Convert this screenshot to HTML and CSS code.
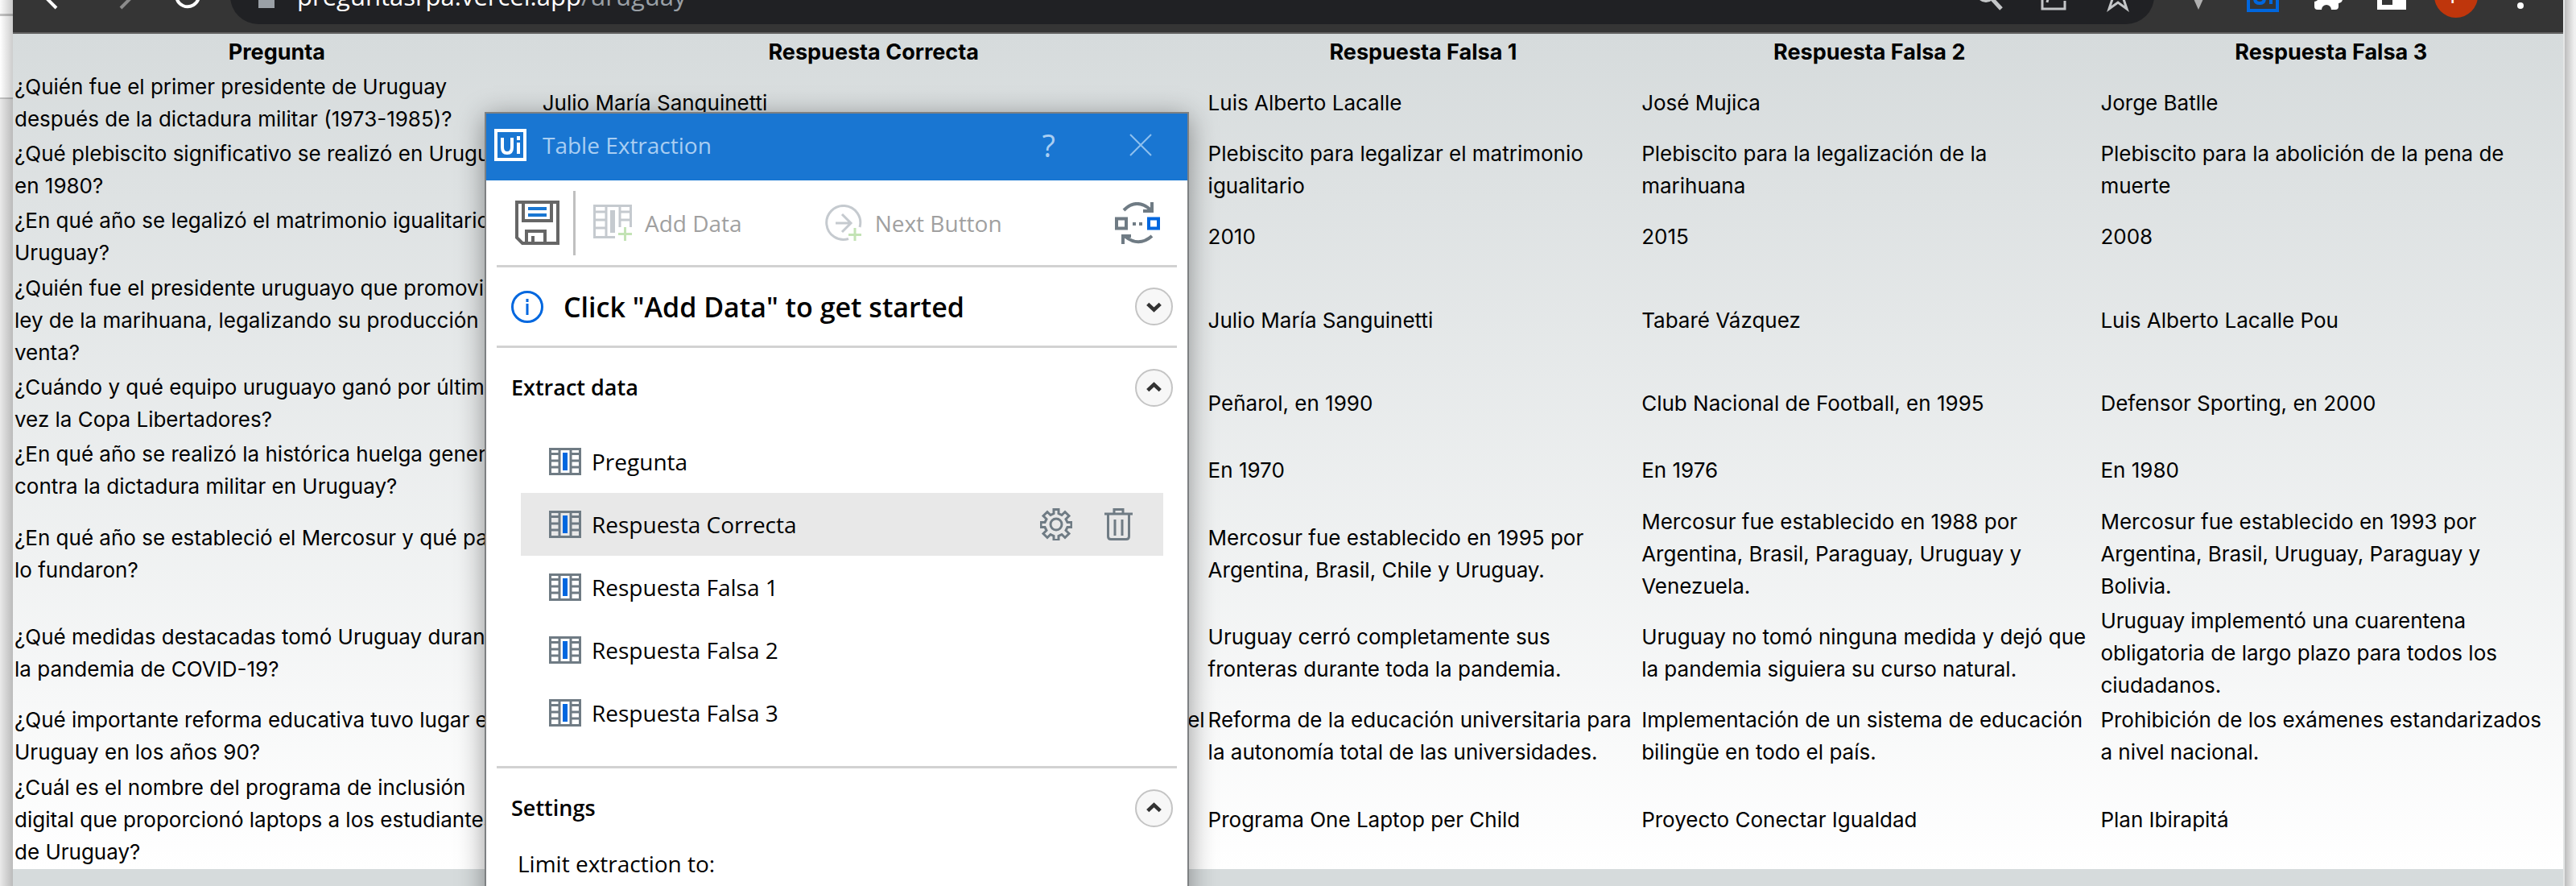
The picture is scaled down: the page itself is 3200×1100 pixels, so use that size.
FILE: index.html
```html
<!DOCTYPE html>
<html lang="es">
<head>
<meta charset="utf-8">
<title>Preguntas de Uruguay</title>
<link rel="stylesheet" href="styles.css">
</head>
<body>
<svg class="defs" aria-hidden="true">
  <symbol id="column" viewBox="0 0 40 34">
    <path d="M1.5 1.5h37v31h-37zM13 2v30M27 2v30M2 7.500h11M2 16h11M2 24h11M27 7.500h11M27 16h11M27 24h11" fill="none" stroke="#6f7b84" stroke-width="3"/>
    <path d="M17 6h6v22h-6z" fill="#0067df"/>
  </symbol>
  <symbol id="up" viewBox="0 0 47 47"><path d="M15 27l8.500-8 8.500 8" fill="none" stroke="#333" stroke-width="5"/></symbol>
  <symbol id="down" viewBox="0 0 47 47"><path d="M15 20l8.500 8 8.500-8" fill="none" stroke="#333" stroke-width="5"/></symbol>
</svg>
<div class="desktop">
  <div class="behind"></div>
  <main class="browser">
    <header class="bar">
      <nav class="nav">
        <button class="tool" aria-label="Atrás"><svg viewBox="0 0 40 40"><path d="M37 20H7M21 5L6 20l15 15" stroke="#fff" stroke-width="4" fill="none"/></svg></button>
        <button class="tool" aria-label="Adelante"><svg viewBox="0 0 40 40"><path d="M3 20h30M19 5l15 15-15 15" stroke="#8b8b8b" stroke-width="4" fill="none"/></svg></button>
        <button class="tool" aria-label="Recargar"><svg viewBox="0 0 40 40"><path d="M33 14a14 14 0 1 0 1 6M34 4v11H23" stroke="#fff" stroke-width="4" fill="none"/></svg></button>
      </nav>
      <div class="address">
        <svg class="lock" viewBox="0 0 20 30"><path d="M0 10h20v20H0zM4 11V6a6 6 0 0 1 12 0v5" fill="#9aa0a6"/></svg>
        <a class="url" href="#">preguntasrpa.vercel.app<span>/uruguay</span></a>
        <button class="tool" aria-label="Buscar"><svg viewBox="0 0 40 40"><circle cx="16" cy="16" r="10" stroke="#c4c6c8" stroke-width="4" fill="none"/><path d="M23 23l12 13" stroke="#c4c6c8" stroke-width="5"/></svg></button>
        <button class="tool" aria-label="Compartir"><svg viewBox="0 0 40 40"><path d="M15 8H6v28h28V26M12 28q2-13 20-15M25 5l9 8-9 8" stroke="#c4c6c8" stroke-width="3" fill="none"/></svg></button>
        <button class="tool" aria-label="Favorito"><svg viewBox="0 0 40 40"><path d="M20 4l4 13h13L27 24l4 12-11-8-11 8 4-12L3 17h13z" stroke="#c4c6c8" stroke-width="3" fill="none"/></svg></button>
      </div>
      <div class="extensions">
        <button class="tool" aria-label="Vue"><svg viewBox="0 0 40 40"><path d="M7 8h26L20 37z" fill="#b0b0b0"/></svg></button>
        <button class="tool" aria-label="UiPath"><svg viewBox="0 0 40 40"><path d="M2 2h36v36H2z" stroke="#0067df" stroke-width="4" fill="none"/><path d="M10 12v11q0 6 6 6t6-6V12M30 17v13M30 10v4" stroke="#0067df" stroke-width="4" fill="none"/></svg></button>
        <button class="tool" aria-label="Extensiones"><svg viewBox="0 0 40 40"><path d="M4 12q0-4 4-4h7a5 5 0 0 1 10 0h5q4 0 4 4v7a5 5 0 0 1 0 10v4q0 4-4 4h-5a6 6 0 0 0-12 0H8q-4 0-4-4v-6a5 5 0 0 0 0-10z" fill="#fff"/></svg></button>
        <button class="tool" aria-label="Panel lateral"><svg viewBox="0 0 40 40"><path d="M2 5h36v32H2zM8 11v20h13V11z" fill="#fff" fill-rule="evenodd"/></svg></button>
        <button class="avatar" aria-label="Perfil">F</button>
        <button class="tool" aria-label="Menú"><svg viewBox="0 0 40 40"><circle cx="20" cy="8" r="4" fill="#fff"/><circle cx="20" cy="20" r="4" fill="#fff"/><circle cx="20" cy="32" r="4" fill="#fff"/></svg></button>
      </div>
    </header>
    <table class="quiz">
      <colgroup><col class="c1"><col class="c2"><col class="c3"><col class="c4"><col class="c5"></colgroup>
      <thead>
        <tr><th>Pregunta</th><th>Respuesta Correcta</th><th>Respuesta Falsa 1</th><th>Respuesta Falsa 2</th><th>Respuesta Falsa 3</th></tr>
      </thead>
      <tbody>
        <tr><td>¿Quién fue el primer presidente de Uruguay<br>después de la dictadura militar (1973-1985)?</td><td>Julio María Sanguinetti</td><td>Luis Alberto Lacalle</td><td>José Mujica</td><td>Jorge Batlle</td></tr>
        <tr><td>¿Qué plebiscito significativo se realizó en Uruguay<br>en 1980?</td><td></td><td>Plebiscito para legalizar el matrimonio<br>igualitario</td><td>Plebiscito para la legalización de la<br>marihuana</td><td>Plebiscito para la abolición de la pena de<br>muerte</td></tr>
        <tr><td>¿En qué año se legalizó el matrimonio igualitario en<br>Uruguay?</td><td></td><td>2010</td><td>2015</td><td>2008</td></tr>
        <tr><td>¿Quién fue el presidente uruguayo que promovió la<br>ley de la marihuana, legalizando su producción y<br>venta?</td><td></td><td>Julio María Sanguinetti</td><td>Tabaré Vázquez</td><td>Luis Alberto Lacalle Pou</td></tr>
        <tr><td>¿Cuándo y qué equipo uruguayo ganó por última<br>vez la Copa Libertadores?</td><td></td><td>Peñarol, en 1990</td><td>Club Nacional de Football, en 1995</td><td>Defensor Sporting, en 2000</td></tr>
        <tr><td>¿En qué año se realizó la histórica huelga general<br>contra la dictadura militar en Uruguay?</td><td></td><td>En 1970</td><td>En 1976</td><td>En 1980</td></tr>
        <tr><td>¿En qué año se estableció el Mercosur y qué países<br>lo fundaron?</td><td></td><td>Mercosur fue establecido en 1995 por<br>Argentina, Brasil, Chile y Uruguay.</td><td>Mercosur fue establecido en 1988 por<br>Argentina, Brasil, Paraguay, Uruguay y<br>Venezuela.</td><td>Mercosur fue establecido en 1993 por<br>Argentina, Brasil, Uruguay, Paraguay y<br>Bolivia.</td></tr>
        <tr><td>¿Qué medidas destacadas tomó Uruguay durante<br>la pandemia de COVID-19?</td><td></td><td>Uruguay cerró completamente sus<br>fronteras durante toda la pandemia.</td><td>Uruguay no tomó ninguna medida y dejó que<br>la pandemia siguiera su curso natural.</td><td>Uruguay implementó una cuarentena<br>obligatoria de largo plazo para todos los<br>ciudadanos.</td></tr>
        <tr><td>¿Qué importante reforma educativa tuvo lugar en<br>Uruguay en los años 90?</td><td class="end">el</td><td>Reforma de la educación universitaria para<br>la autonomía total de las universidades.</td><td>Implementación de un sistema de educación<br>bilingüe en todo el país.</td><td>Prohibición de los exámenes estandarizados<br>a nivel nacional.</td></tr>
        <tr><td>¿Cuál es el nombre del programa de inclusión<br>digital que proporcionó laptops a los estudiantes<br>de Uruguay?</td><td></td><td>Programa One Laptop per Child</td><td>Proyecto Conectar Igualdad</td><td>Plan Ibirapitá</td></tr>
      </tbody>
    </table>
  </main>
  <div class="behind right"></div>
</div>

<section class="dialog" role="dialog" aria-labelledby="dialog-title">
  <header class="titlebar">
    <svg class="logo" viewBox="0 0 40 40"><path d="M2 2h36v36H2z" stroke="#fff" stroke-width="4" fill="none"/><path d="M10 11v12q0 7 6 7t6-7V11M30 17v14M30 9v5" stroke="#fff" stroke-width="4" fill="none"/></svg>
    <h1 id="dialog-title">Table Extraction</h1>
    <button class="help" aria-label="Help">?</button>
    <button class="close" aria-label="Close"><svg viewBox="0 0 28 28"><path d="M1 1l26 26M27 1L1 27" stroke="#8fc0ee" stroke-width="2"/></svg></button>
  </header>
  <div class="content">
    <div class="toolbar">
      <button class="save" aria-label="Save"><svg viewBox="0 0 55 55"><path d="M2 2h51v51H9l-7-7zM10 3v22h35V3M14 53V38h23v15M22 44v9" fill="none" stroke="#666" stroke-width="4"/><path d="M16 10h23M16 18h23" stroke="#1976d2" stroke-width="4"/></svg></button>
      <button class="action add" disabled><svg viewBox="0 0 48 46"><path d="M27 40.500H1.500v-39h45V28M16 2v38M33 2v26M2 9h14M2 19h14M2 29h14M33 9h13M33 19h13" fill="none" stroke="#c5cacf" stroke-width="3"/><path d="M21 7h6v28h-6z" fill="#c5cacf"/><path d="M31 36.500h17M39.500 28v17" stroke="#c3e3b5" stroke-width="3"/></svg>Add Data</button>
      <button class="action next" disabled><svg viewBox="0 0 46 46"><path d="M43 28A21 21 0 1 0 29 42.500M13 23h19M21 12l11 11-11 11" fill="none" stroke="#c5cacf" stroke-width="3"/><path d="M29 37.500h16M37 29v16" stroke="#c3e3b5" stroke-width="3"/></svg>Next Button</button>
      <button class="swap" aria-label="Change selection"><svg viewBox="0 0 56 52"><path d="M11 10q16-16 34 0" fill="none" stroke="#6f7b84" stroke-width="4"/><path d="M48 0v13H35v-4h9V0z" fill="#6f7b84"/><path d="M46 42q-16 14-33 1" fill="none" stroke="#6f7b84" stroke-width="4"/><path d="M8 52V40h12v4h-8v8z" fill="#6f7b84"/><path d="M2 20.500h12v12H2z" fill="none" stroke="#6f7b84" stroke-width="4"/><path d="M42 20.500h12v12H42z" fill="none" stroke="#0067df" stroke-width="4"/><path d="M22 25h4v4h-4zM30 25h4v4h-4z" fill="#6f7b84"/></svg></button>
    </div>
    <div class="hint">
      <svg class="info" viewBox="0 0 40 40"><circle cx="20" cy="20" r="18.500" fill="none" stroke="#0067df" stroke-width="3"/><path d="M20 10v4M20 16v14" stroke="#0067df" stroke-width="3"/></svg>
      <h2>Click "Add Data" to get started</h2>
      <button class="round" aria-label="Expand"><svg><use href="#down"/></svg></button>
    </div>
    <div class="extract">
      <div class="head"><h3>Extract data</h3><button class="round" aria-label="Collapse extract data"><svg><use href="#up"/></svg></button></div>
      <ul class="columns">
        <li><svg class="col"><use href="#column"/></svg>Pregunta</li>
        <li class="selected"><svg class="col"><use href="#column"/></svg>Respuesta Correcta
          <button class="gear" aria-label="Column settings"><svg viewBox="0 0 40 40"><path d="M17 1.500h6v5l4 2 4-4 5 5-4 4 2 4h5v6h-5l-2 4 4 4-5 5-4-4-4 2v5h-6v-5l-4-2-4 4-5-5 4-4-2-4h-5v-6h5l2-4-4-4 5-5 4 4 4-2z" fill="none" stroke="#6f7b84" stroke-width="3"/><circle cx="20" cy="20" r="7" fill="none" stroke="#6f7b84" stroke-width="3"/></svg></button>
          <button class="trash" aria-label="Delete column"><svg viewBox="0 0 35 40"><path d="M0 7h35M12 6V1.500h11V6M4.500 8v27q0 3.500 3.500 3.500h19q3.500 0 3.500-3.500V8M13 14v20M22 14v20" fill="none" stroke="#6f7b84" stroke-width="3"/></svg></button>
        </li>
        <li><svg class="col"><use href="#column"/></svg>Respuesta Falsa 1</li>
        <li><svg class="col"><use href="#column"/></svg>Respuesta Falsa 2</li>
        <li><svg class="col"><use href="#column"/></svg>Respuesta Falsa 3</li>
      </ul>
    </div>
    <div class="settings">
      <div class="head"><h3>Settings</h3><button class="round" aria-label="Collapse settings"><svg><use href="#up"/></svg></button></div>
      <p>Limit extraction to:</p>
    </div>
  </div>
</section>
</body>
</html>
```
FILE: styles.css
```css
* { box-sizing: border-box; }

body {
  margin: 0;
  height: 100vh;
  overflow: hidden;
  position: relative;
  color: #000;
  font-family: Inter, sans-serif;
  font-size: 26px;
  line-height: 40px;
}

button {
  border: 0;
  padding: 0;
  background: none;
  color: inherit;
  font: inherit;
  display: flex;
  align-items: center;
  flex: none;
}

svg { display: block; flex: none; }
h1, h2, h3, p, ul { margin: 0; padding: 0; font-weight: 400; }
.defs { display: none; }

/* Desktop with the browser window on it */
.desktop {
  display: grid;
  grid-template-columns: 16px 1fr 16px;
  min-height: 100vh;
}

.behind {
  background:
    linear-gradient(90deg, transparent, rgba(0, 0, 0, .2)),
    linear-gradient(#fafafa 17px, #c4c4c4 17px 20px, #fff 20px 121px, #c4c4c4 121px 123px, #e9e9e9 123px);
}

.behind.right {
  border-left: 2px solid #e4e6e6;
  background: linear-gradient(90deg, #bdbdbd, #f0f0f0 12px);
}

.browser { background: #d6dbdc; min-width: 0; }

.bar {
  display: flex;
  align-items: flex-end;
  height: 42px;
  padding: 0 33px 10px;
  overflow: hidden;
  background: #353535;
  border-bottom: 2px solid #626262;
}

.nav { display: flex; align-items: center; height: 70px; gap: 42px; padding-right: 33px; }
.tool svg { width: 40px; height: 40px; }

.address {
  display: flex;
  align-items: center;
  gap: 40px;
  flex: 1;
  height: 70px;
  padding: 0 25px 0 35px;
  border-radius: 35px;
  background: #202124;
}

.lock { width: 20px; height: 30px; }
.url {
  flex: 1;
  margin-left: -12px;
  color: #fff;
  font-family: "Open Sans", sans-serif;
  font-size: 31px;
  text-decoration: none;
}
.url span { color: #9aa0a6; }

.extensions { display: flex; align-items: center; height: 70px; gap: 40px; padding-left: 35px; }
.avatar {
  width: 54px;
  height: 54px;
  margin: 0 -7px;
  justify-content: center;
  border-radius: 50%;
  background: #bf360c;
  color: #fff;
}

/* Question table */
.quiz {
  width: 100%;
  table-layout: fixed;
  border-collapse: collapse;
  background: linear-gradient(#d6dbdc, #fff);
}
.c1 { width: 20.7%; }
.c2 { width: 26.1%; }
.c3 { width: 17%; }
.c4 { width: 18%; }
.c5 { width: 18.2%; }
.quiz th { padding: 3px 2px 1px; font-size: 27px; font-weight: 700; }
.quiz td { padding: 2px 2px 1px; vertical-align: middle; white-space: nowrap; }
.quiz tr:nth-child(3n) td { padding-bottom: 2px; }
.quiz .end { text-align: right; vertical-align: top; }

/* Table extraction dialog, floating over the browser */
.dialog {
  position: absolute;
  left: 602px;
  top: 139px;
  width: 875px;
  border: 2px solid #7d8082;
  background: #fff;
  box-shadow: 0 6px 32px rgba(0, 0, 0, .4);
  font-family: "Open Sans", sans-serif;
  font-size: 28px;
}

.titlebar {
  display: flex;
  align-items: center;
  height: 83px;
  padding: 0 44px 6px 10px;
  background: #1976d2;
  color: #a9cef2;
}
.logo { width: 40px; height: 40px; }
.titlebar h1 { flex: 1; padding-left: 20px; font-size: 28px; }
.help { margin-right: 92px; font-size: 38px; }
.close svg { width: 28px; height: 28px; }

.content { padding: 0 13px; }
.content > div + div { border-top: 3px solid #d2d2d2; }

.toolbar { display: flex; align-items: center; height: 105px; padding: 0 21px 0 23px; }
.save { height: 80px; padding-right: 17px; border-right: 3px solid #c0c0c0; }
.save svg { width: 55px; height: 55px; }
.action { color: #a0a0a0; gap: 16px; }
.action svg { width: 48px; height: 46px; }
.action.add { margin-left: 22px; }
.action.next { margin-left: 103px; }
.action.next svg { width: 46px; }
.swap { margin-left: auto; }
.swap svg { width: 56px; height: 52px; }

.hint { display: flex; align-items: center; height: 100px; padding: 0 5px 0 18px; }
.info { width: 40px; height: 40px; }
.hint h2 { flex: 1; padding-left: 25px; font-size: 34px; font-weight: 600; }

.round {
  width: 47px;
  height: 47px;
  border: 2px solid #c4c4c4;
  border-radius: 50%;
  background: #f7f7f7;
}
.round svg { width: 43px; height: 43px; }

.head { display: flex; align-items: center; justify-content: space-between; height: 98px; padding: 0 5px 0 18px; }
.head h3 { font-size: 27px; font-weight: 600; }
.columns { list-style: none; padding: 4px 17px 27px 30px; }
.columns li { display: flex; align-items: center; height: 78px; padding: 0 38px 0 35px; }
.columns .selected { background: #e8e8e8; }
.col { width: 40px; height: 34px; margin-right: 13px; }
.gear { margin-left: auto; margin-right: 40px; }
.gear svg { width: 40px; height: 40px; }
.trash svg { width: 35px; height: 40px; }

.settings p { padding-left: 26px; height: 90px; }
```
